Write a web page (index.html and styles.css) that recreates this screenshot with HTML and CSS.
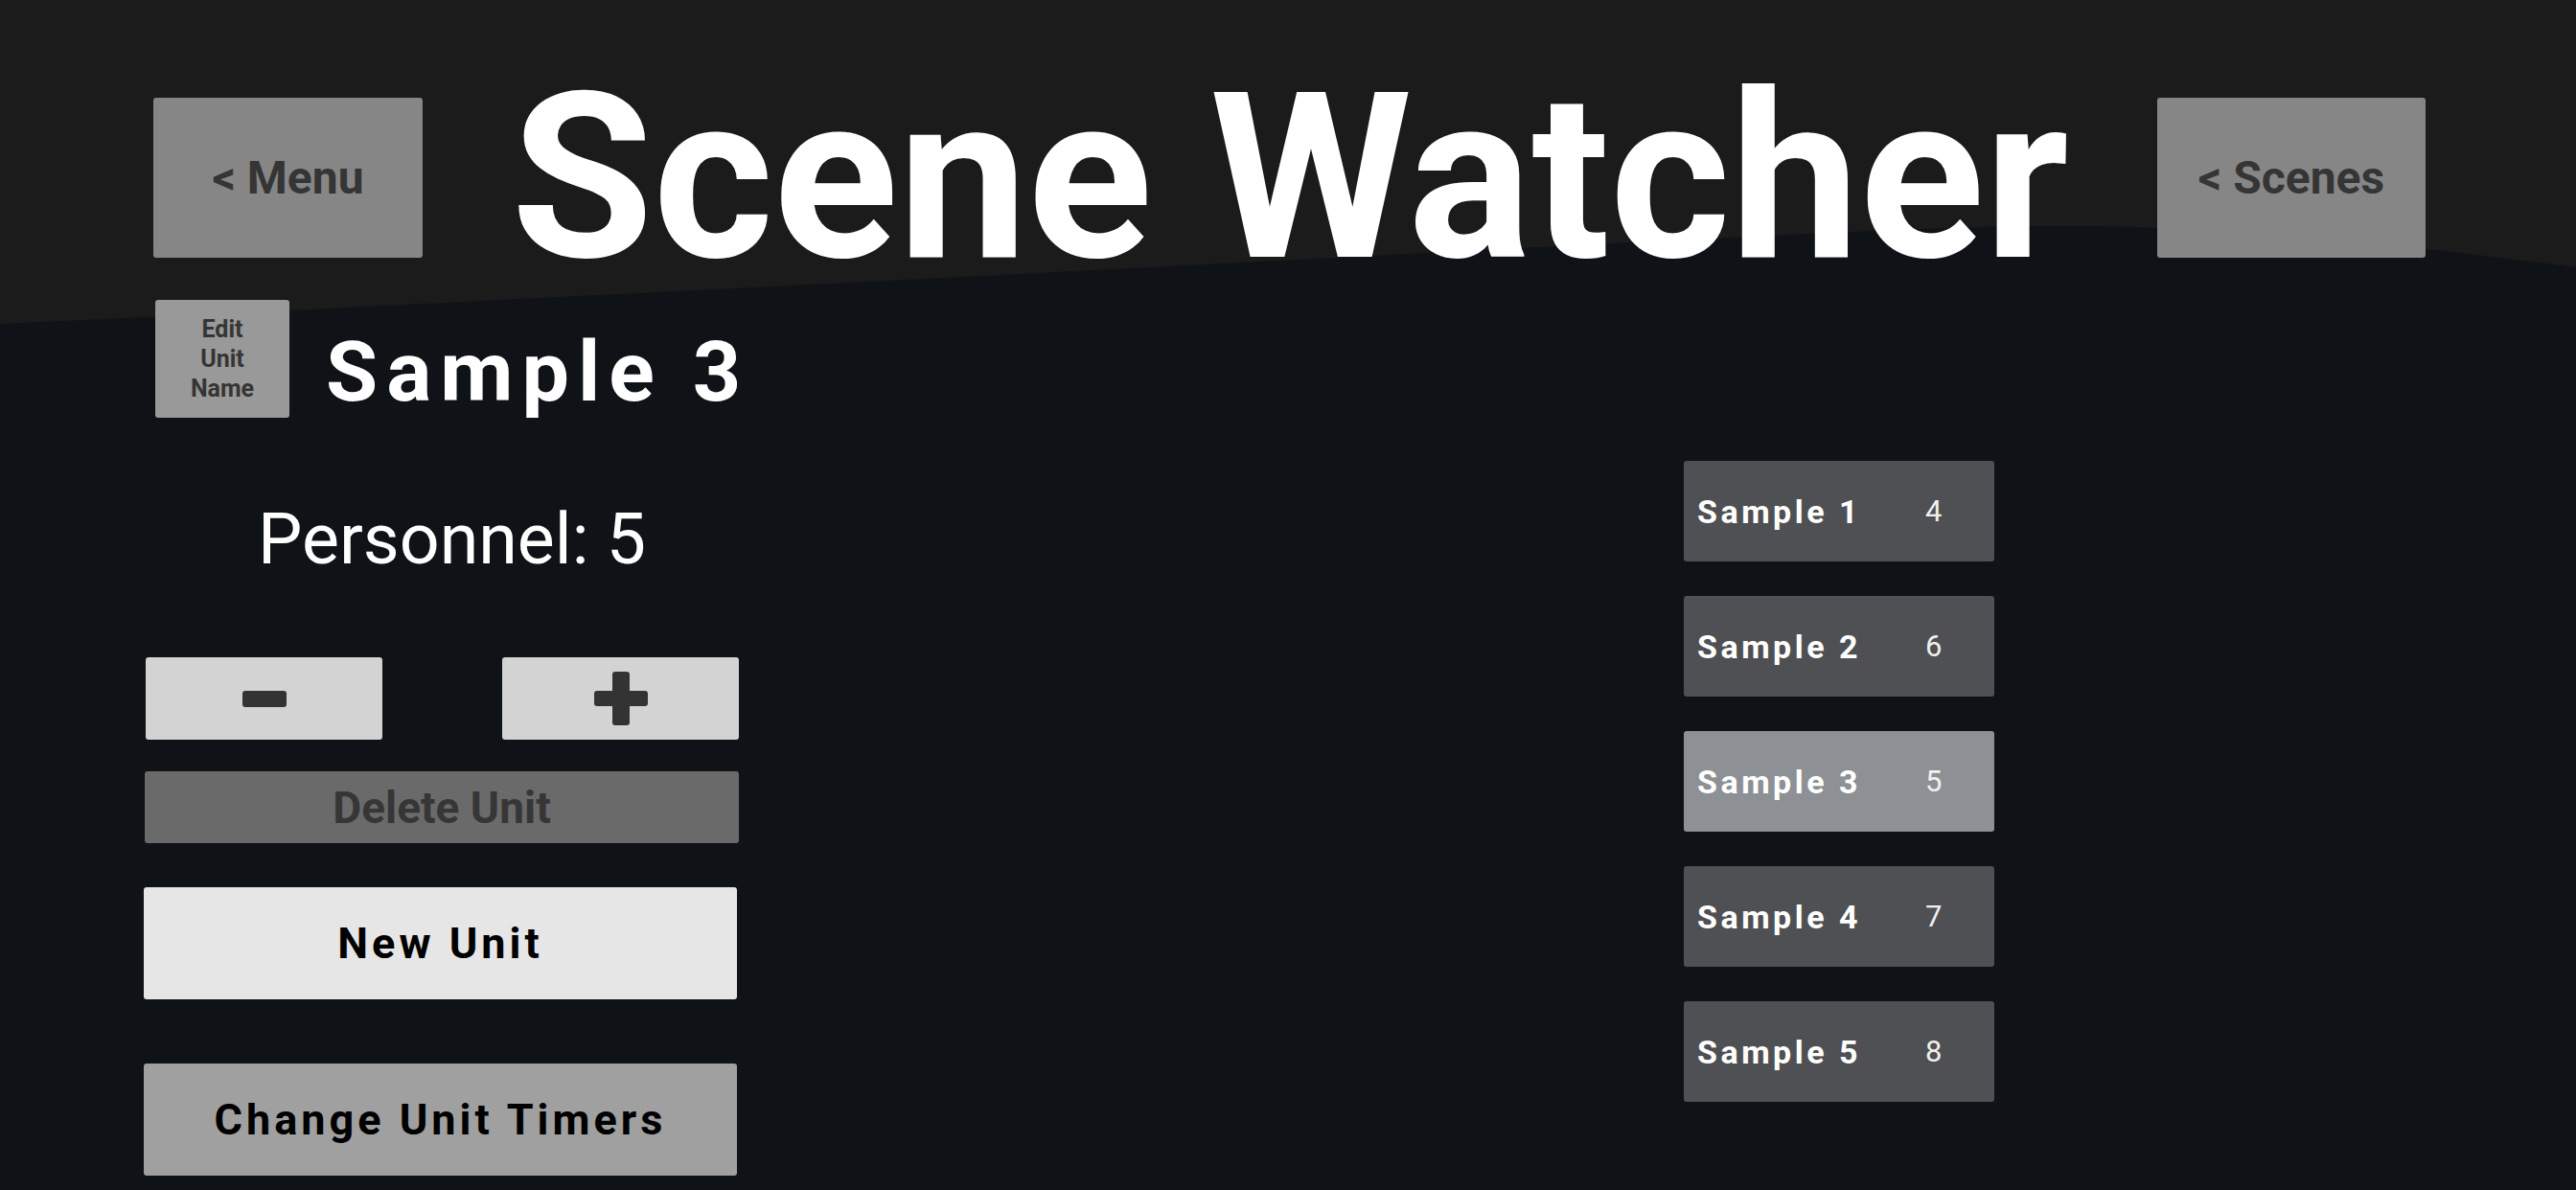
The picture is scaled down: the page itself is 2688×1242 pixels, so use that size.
FILE: index.html
```
<!DOCTYPE html>
<html>
<head>
<meta charset="utf-8">
<link rel="stylesheet" href="styles.css">
</head>
<body>
<svg class="backdrop" viewBox="0 0 2688 1242" preserveAspectRatio="none" aria-hidden="true">
  <path d="M0 0 H2688 V279 C2500 255 2300 230 2065 237 C1800 245 1200 282 0 338 Z" fill="#1b1b1b"/>
</svg>
<div class="page">
  <header class="header">
    <div class="btn btn-nav">&lt; Menu</div>
    <h1 class="title">Scene Watcher</h1>
    <div class="btn btn-nav">&lt; Scenes</div>
  </header>
  <main class="content">
    <section class="left">
      <div class="name-row">
        <div class="btn btn-edit">Edit<br>Unit<br>Name</div>
        <div class="unit-name">Sample 3</div>
      </div>
      <div class="personnel">Personnel: 5</div>
      <div class="step-row">
        <div class="btn btn-step">
          <svg width="46" height="17" viewBox="0 0 46 17"><rect x="0" y="0" width="46" height="17" rx="3" fill="#333"/></svg>
        </div>
        <div class="btn btn-step">
          <svg width="56" height="56" viewBox="0 0 56 56"><rect x="0" y="20" width="56" height="16" rx="3" fill="#333"/><rect x="19" y="0" width="18" height="56" rx="3" fill="#333"/></svg>
        </div>
      </div>
      <div class="btn btn-delete">Delete Unit</div>
      <div class="btn btn-new">New Unit</div>
      <div class="btn btn-timers">Change Unit Timers</div>
    </section>
    <section class="unit-list">
      <div class="unit-item"><span class="unit-label">Sample 1</span><span class="unit-count">4</span></div>
      <div class="unit-item"><span class="unit-label">Sample 2</span><span class="unit-count">6</span></div>
      <div class="unit-item selected"><span class="unit-label">Sample 3</span><span class="unit-count">5</span></div>
      <div class="unit-item"><span class="unit-label">Sample 4</span><span class="unit-count">7</span></div>
      <div class="unit-item"><span class="unit-label">Sample 5</span><span class="unit-count">8</span></div>
    </section>
  </main>
</div>
</body>
</html>
```
FILE: styles.css
```
html, body {
  margin: 0;
  padding: 0;
}
body {
  width: 2688px;
  height: 1242px;
  overflow: hidden;
  background: #0f1217;
  font-family: Roboto, "Liberation Sans", sans-serif;
  position: relative;
}
.backdrop {
  position: absolute;
  left: 0;
  top: 0;
  width: 2688px;
  height: 1242px;
  z-index: 0;
}
.page {
  position: relative;
  z-index: 1;
}
.header {
  display: grid;
  grid-template-columns: 281px 1fr 280px;
  align-items: start;
  padding: 64px 157px 0 160px;
  height: 243px;
}
.btn {
  border-radius: 3px;
  display: flex;
  align-items: center;
  justify-content: center;
  box-sizing: border-box;
  font-weight: 700;
  color: #353535;
  flex-shrink: 0;
}
.btn-nav {
  margin-top: 38px;
  height: 167px;
  background: #868686;
  font-size: 48px;
}
.title {
  margin: 0;
  font-size: 241px;
  line-height: 243px;
  font-weight: 700;
  color: #ffffff;
  text-align: center;
  white-space: nowrap;
}
.content {
  display: flex;
  align-items: flex-start;
  padding-left: 150px;
}
.left {
  width: 621px;
  flex-shrink: 0;
  display: flex;
  flex-direction: column;
}
.name-row {
  display: flex;
  align-items: flex-start;
  margin-top: 6px;
  margin-left: 12px;
}
.btn-edit {
  width: 140px;
  height: 123px;
  background: #999999;
  font-size: 25px;
  line-height: 31px;
  text-align: center;
}
.unit-name {
  flex-shrink: 0;
  margin-top: 31px;
  margin-left: 38px;
  font-size: 88px;
  line-height: 88px;
  font-weight: 700;
  letter-spacing: 9px;
  color: #ffffff;
  white-space: nowrap;
}
.personnel {
  margin-top: 92px;
  padding-left: 119px;
  font-size: 73.5px;
  line-height: 70px;
  color: #ffffff;
  white-space: nowrap;
}
.step-row {
  margin-top: 88px;
  margin-left: 2px;
  width: 619px;
  display: flex;
  justify-content: space-between;
}
.btn-step {
  width: 247px;
  height: 86px;
  background: #d3d3d3;
}
.btn-step svg {
  display: block;
}
.btn-delete {
  margin-top: 33px;
  margin-left: 1px;
  width: 620px;
  height: 75px;
  background: #6a6a6a;
  font-size: 46px;
  color: #363636;
}
.btn-new {
  margin-top: 46px;
  width: 619px;
  height: 117px;
  background: #e6e6e6;
  font-size: 45px;
  letter-spacing: 4px;
  color: #000000;
}
.btn-timers {
  margin-top: 67px;
  width: 619px;
  height: 117px;
  background: #a0a0a0;
  font-size: 45px;
  letter-spacing: 4px;
  color: #000000;
}
.unit-list {
  margin-top: 174px;
  margin-left: 986px;
  display: flex;
  flex-direction: column;
  gap: 36px;
}
.unit-item {
  width: 324px;
  height: 105px;
  box-sizing: border-box;
  border-radius: 3px;
  background: #4f5053;
  display: grid;
  grid-template-columns: 238px auto;
  align-items: center;
  padding-left: 14px;
  color: #ffffff;
}
.unit-item.selected {
  background: #8d9094;
}
.unit-label {
  font-size: 34px;
  font-weight: 700;
  letter-spacing: 3.5px;
  white-space: nowrap;
}
.unit-count {
  font-size: 31px;
  color: #f0f0f0;
}
```
